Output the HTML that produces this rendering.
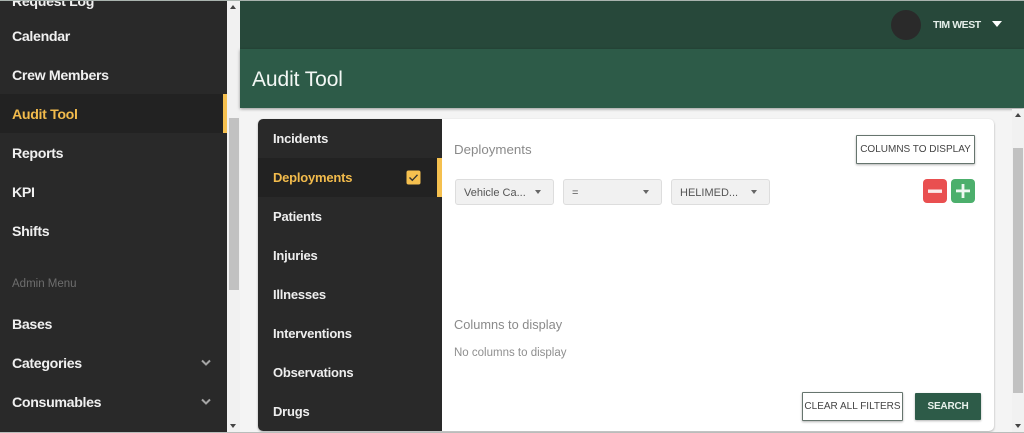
<!DOCTYPE html>
<html><head><meta charset="utf-8">
<style>
*{box-sizing:border-box}
html,body{margin:0;padding:0;width:1024px;height:433px;overflow:hidden;background:#f4f4f4;font-family:"Liberation Sans",sans-serif}
.a{position:absolute}
.t{position:absolute;white-space:nowrap;line-height:20px;height:20px}
.n{left:12px;color:#f0f0f0;font-size:14.2px;font-weight:bold;letter-spacing:-.35px}
.m{left:273px;color:#eee;font-size:13px;font-weight:bold;letter-spacing:-.22px}
.sel{position:absolute;top:179px;height:26px;background:#f1f1f1;border:1px solid #ddd;border-radius:3px;color:#555;font-size:11px;line-height:26px;padding-left:8px}
.sel i{position:absolute;right:12px;top:10px;width:0;height:0;border:3.5px solid transparent;border-top:4px solid #666;border-bottom:0}
.btn{position:absolute;background:#fff;border:1px solid #66756e;box-shadow:0 1px 2px rgba(0,0,0,.3);color:#444;font-size:10px;text-align:center;white-space:nowrap;border-radius:1px}
</style></head>
<body>
<div class="a" style="left:0;top:0;width:227px;height:433px;background:#292929"></div>
<div class="a" style="left:0;top:94px;width:227px;height:39px;background:#222"></div>
<div class="a" style="left:223px;top:94px;width:4px;height:39px;background:#f5c04f"></div>
<div class="t n" style="top:-8px">Request Log</div>
<div class="t n" style="top:27px">Calendar</div>
<div class="t n" style="top:66px">Crew Members</div>
<div class="t n" style="top:105px;color:#f2bb4c">Audit Tool</div>
<div class="t n" style="top:144px">Reports</div>
<div class="t n" style="top:183px">KPI</div>
<div class="t n" style="top:222px">Shifts</div>
<div class="t" style="left:12px;top:274px;color:#6e6e6e;font-size:11.5px">Admin Menu</div>
<div class="t n" style="top:315px">Bases</div>
<div class="t n" style="top:354px">Categories</div>
<div class="t n" style="top:393px">Consumables</div>
<svg class="a" style="left:200px;top:358px" width="12" height="10"><path d="M2 2.5L6 6.5L10 2.5" fill="none" stroke="#a5a5a5" stroke-width="2"/></svg>
<svg class="a" style="left:200px;top:397px" width="12" height="10"><path d="M2 2.5L6 6.5L10 2.5" fill="none" stroke="#a5a5a5" stroke-width="2"/></svg>

<div class="a" style="left:227px;top:0;width:13px;height:433px;background:#f1f1f1"></div>
<div class="a" style="left:229px;top:118px;width:10px;height:172px;background:#c1c1c1"></div>
<div class="a" style="left:230px;top:5px;border:3.5px solid transparent;border-bottom:4px solid #444;border-top:0"></div>
<div class="a" style="left:230px;top:424px;border:3.5px solid transparent;border-top:4px solid #444;border-bottom:0"></div>

<div class="a" style="left:240px;top:0;width:784px;height:49px;background:#27483a"></div>
<div class="a" style="left:240px;top:49px;width:784px;height:59px;background:#2d5b48;box-shadow:0 1px 3px rgba(0,0,0,.4)"></div>
<div class="a" style="left:0;top:0;width:1024px;height:1px;background:#a9b3ae"></div>
<div class="a" style="left:891px;top:10px;width:30px;height:30px;border-radius:50%;background:#2a2a2a"></div>
<div class="t" style="left:933px;top:15px;color:#e4eee9;font-size:10.5px;font-weight:bold;letter-spacing:-.45px">TIM WEST</div>
<div class="a" style="left:992px;top:21px;border:5px solid transparent;border-top:6px solid #fff;border-bottom:0"></div>
<div class="t" style="left:252px;top:70px;color:#f2f7f4;font-size:21px;letter-spacing:-.1px">Audit Tool</div>

<div class="a" style="left:258px;top:119px;width:736px;height:312px;background:#fff;border-radius:5px;box-shadow:0 1px 2px rgba(0,0,0,.3)"></div>
<div class="a" style="left:258px;top:119px;width:184px;height:312px;background:#292929;border-radius:5px 0 0 5px"></div>
<div class="a" style="left:258px;top:158px;width:184px;height:39px;background:#222"></div>
<div class="a" style="left:437px;top:158px;width:5px;height:39px;background:#f5c04f"></div>
<div class="t m" style="top:129px">Incidents</div>
<div class="t m" style="top:168px;color:#f2bb4c">Deployments</div>
<div class="t m" style="top:207px">Patients</div>
<div class="t m" style="top:246px">Injuries</div>
<div class="t m" style="top:285px">Illnesses</div>
<div class="t m" style="top:324px">Interventions</div>
<div class="t m" style="top:363px">Observations</div>
<div class="t m" style="top:402px">Drugs</div>
<svg class="a" style="left:406px;top:170px" width="15" height="15"><rect width="14" height="14" x=".5" y=".5" rx="2" fill="#f5c04f"/><path d="M3.5 7.5L6.3 10.3L11.5 4.8" fill="none" stroke="#333" stroke-width="1.4"/></svg>

<div class="t" style="left:454px;top:140px;color:#8a8a8a;font-size:13.3px">Deployments</div>
<div class="btn" style="left:856px;top:135px;width:119px;height:29px;line-height:28px">COLUMNS TO DISPLAY</div>
<div class="sel" style="left:455px;width:99px">Vehicle Ca...<i></i></div>
<div class="sel" style="left:563px;width:99px">=<i></i></div>
<div class="sel" style="left:671px;width:99px">HELIMED...<i></i></div>
<svg class="a" style="left:923px;top:179px" width="24" height="24"><rect width="24" height="24" rx="4" fill="#e94f50"/><rect x="5" y="10.5" width="14" height="3.4" fill="#fbeaea"/></svg>
<svg class="a" style="left:951px;top:179px" width="24" height="24"><rect width="24" height="24" rx="4" fill="#4caf6c"/><rect x="5" y="10.5" width="14" height="2.8" fill="#eef8f1"/><rect x="10.6" y="5" width="2.8" height="14" fill="#eef8f1"/></svg>
<div class="t" style="left:454px;top:315px;color:#8a8a8a;font-size:12.8px">Columns to display</div>
<div class="t" style="left:454px;top:343px;color:#8f8f8f;font-size:11.5px">No columns to display</div>
<div class="btn" style="left:802px;top:392px;width:101px;height:29px;line-height:28px">CLEAR ALL FILTERS</div>
<div class="a" style="left:915px;top:393px;width:66px;height:27px;background:#2d5b48;border-radius:1px;color:#e8f1ec;font-size:10px;font-weight:bold;letter-spacing:-.2px;line-height:28px;text-align:center;box-shadow:0 1px 2px rgba(0,0,0,.3)">SEARCH</div>

<div class="a" style="left:1012px;top:109px;width:12px;height:324px;background:#f1f1f1"></div>
<div class="a" style="left:1013px;top:148px;width:10px;height:245px;background:#c1c1c1"></div>
<div class="a" style="left:1015px;top:113px;border:3.5px solid transparent;border-bottom:4px solid #444;border-top:0"></div>
<div class="a" style="left:1015px;top:424px;border:3.5px solid transparent;border-top:4px solid #444;border-bottom:0"></div>
<div class="a" style="left:0;top:432px;width:1024px;height:1px;background:#b9bdbb"></div>
</body></html>
